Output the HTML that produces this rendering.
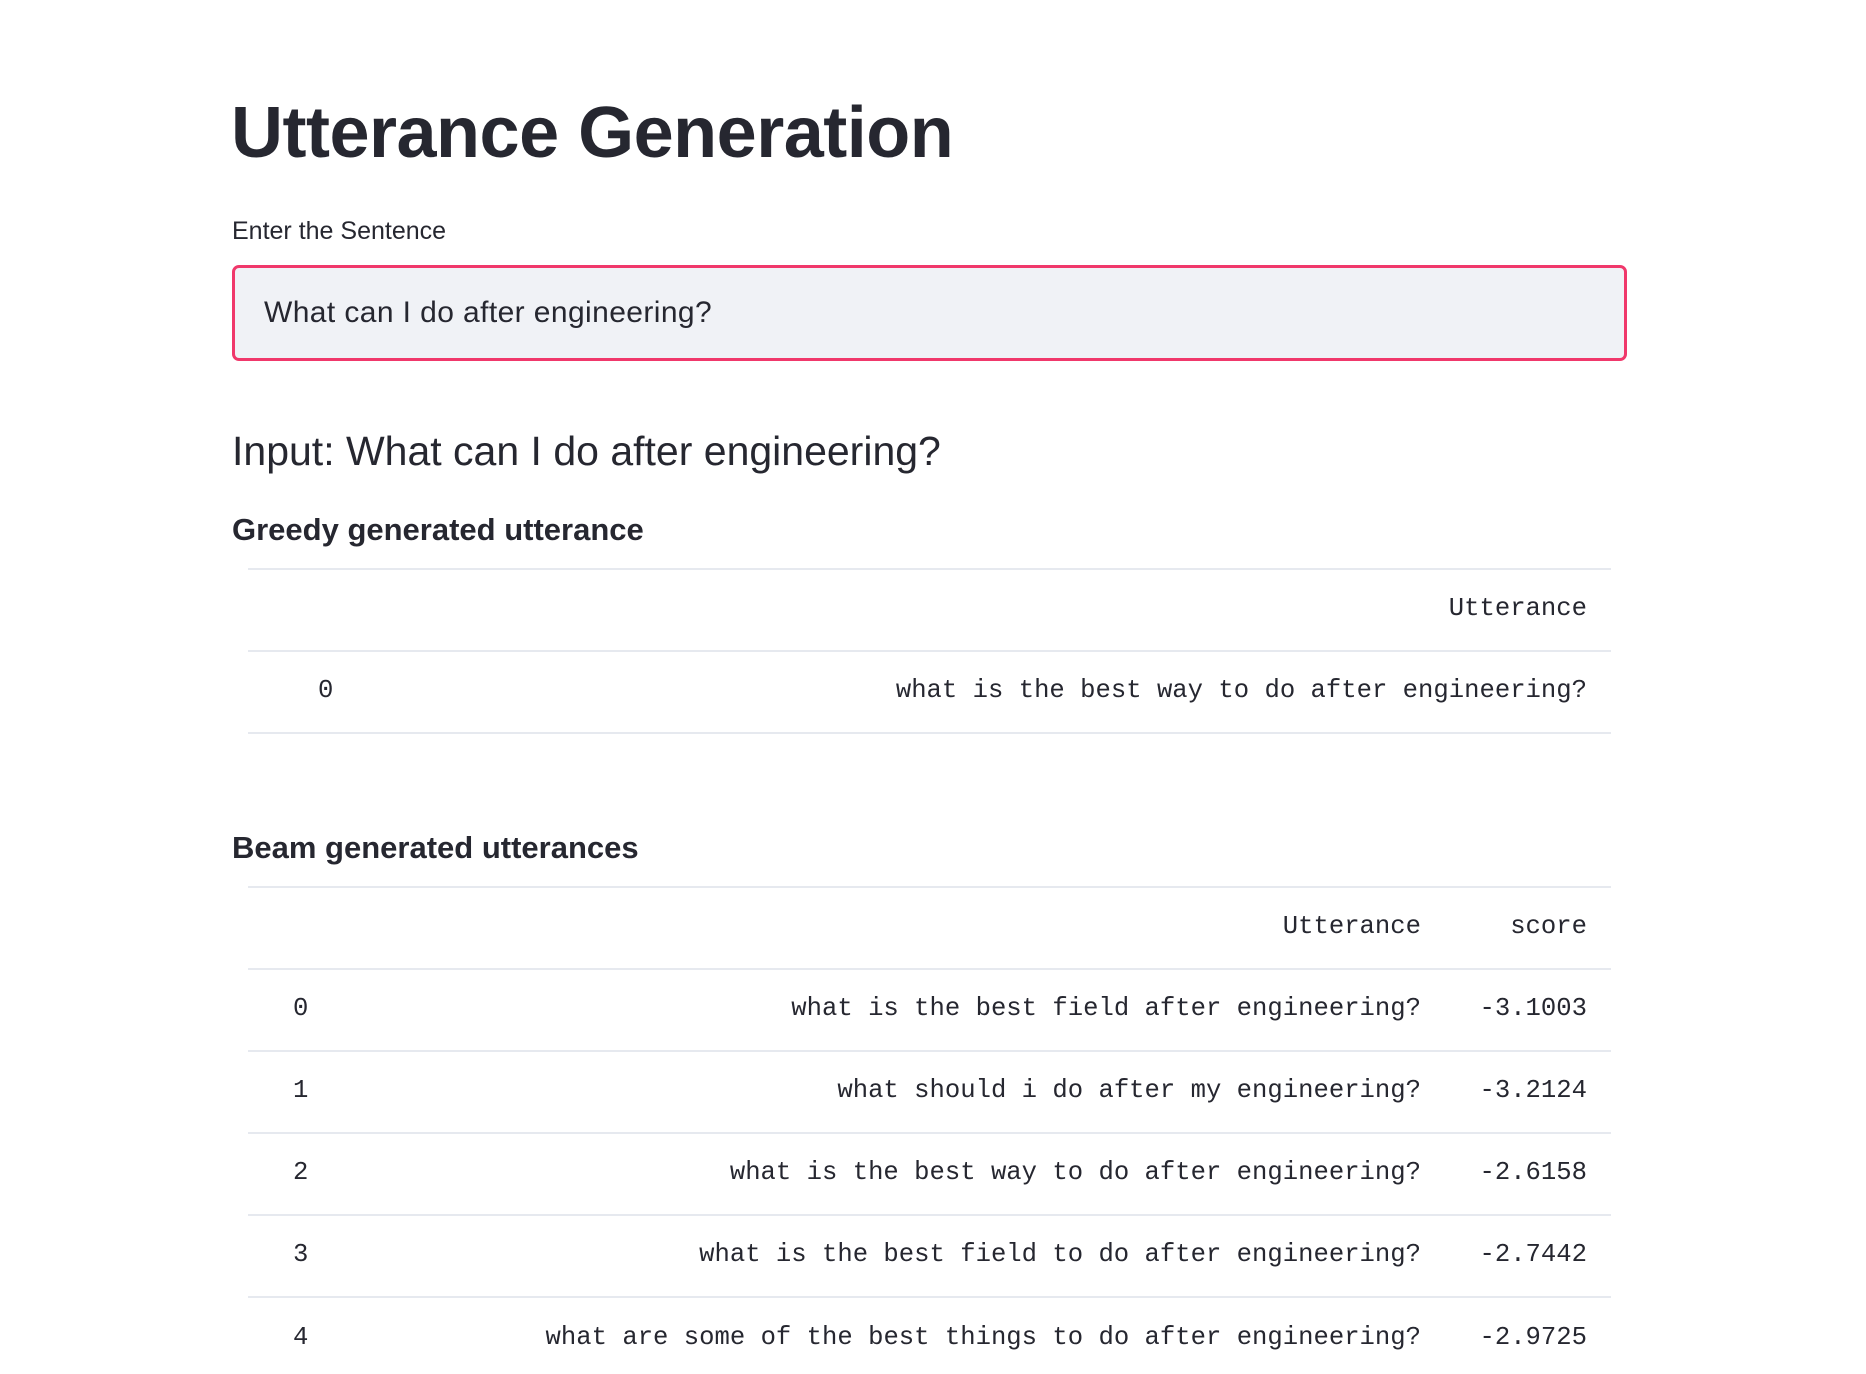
<!DOCTYPE html>
<html><head><meta charset="utf-8"><style>
body{margin:0;width:1866px;height:1374px;background:#fff;color:#262730;font-family:"Liberation Sans",sans-serif;position:relative;overflow:hidden}
.a{position:absolute;white-space:nowrap}
.m{font-family:"Liberation Mono",monospace;font-size:25.6px;line-height:30px}
.r{text-align:right}
.hl{position:absolute;left:248px;width:1363px;height:2px;background:#e6e9ef}
</style></head><body>
<div class="a" style="left:231px;top:88px;font-size:72px;font-weight:bold;line-height:90px;letter-spacing:-0.5px">Utterance Generation</div>
<div class="a" style="left:232px;top:216px;font-size:25px;line-height:30px">Enter the Sentence</div>
<div class="a" style="left:232px;top:265px;width:1389px;height:90px;border:3px solid #f0386b;border-radius:7px;background:#f0f2f6"></div>
<div class="a" style="left:264px;top:295px;font-size:30px;line-height:36px;letter-spacing:0.4px">What can I do after engineering?</div>
<div class="a" style="left:232px;top:428px;font-size:41px;line-height:46px">Input: What can I do after engineering?</div>
<div class="a" style="left:232px;top:511px;font-size:31px;font-weight:bold;line-height:38px">Greedy generated utterance</div>
<div class="hl" style="top:568px"></div>
<div class="hl" style="top:650px"></div>
<div class="hl" style="top:732px"></div>
<div class="a m r" style="right:279px;top:594px">Utterance</div>
<div class="a m" style="left:318px;top:676px">0</div>
<div class="a m r" style="right:279px;top:676px">what is the best way to do after engineering?</div>
<div class="a" style="left:232px;top:829px;font-size:31px;font-weight:bold;line-height:38px">Beam generated utterances</div>
<div class="hl" style="top:886px"></div>
<div class="hl" style="top:968px"></div>
<div class="hl" style="top:1050px"></div>
<div class="hl" style="top:1132px"></div>
<div class="hl" style="top:1214px"></div>
<div class="hl" style="top:1296px"></div>
<div class="a m r" style="right:445px;top:912px">Utterance</div>
<div class="a m r" style="right:279px;top:912px">score</div>
<div class="a m" style="left:293px;top:994px">0</div>
<div class="a m r" style="right:445px;top:994px">what is the best field after engineering?</div>
<div class="a m r" style="right:279px;top:994px">-3.1003</div>
<div class="a m" style="left:293px;top:1076px">1</div>
<div class="a m r" style="right:445px;top:1076px">what should i do after my engineering?</div>
<div class="a m r" style="right:279px;top:1076px">-3.2124</div>
<div class="a m" style="left:293px;top:1158px">2</div>
<div class="a m r" style="right:445px;top:1158px">what is the best way to do after engineering?</div>
<div class="a m r" style="right:279px;top:1158px">-2.6158</div>
<div class="a m" style="left:293px;top:1240px">3</div>
<div class="a m r" style="right:445px;top:1240px">what is the best field to do after engineering?</div>
<div class="a m r" style="right:279px;top:1240px">-2.7442</div>
<div class="a m" style="left:293px;top:1323px">4</div>
<div class="a m r" style="right:445px;top:1323px">what are some of the best things to do after engineering?</div>
<div class="a m r" style="right:279px;top:1323px">-2.9725</div>
</body></html>
